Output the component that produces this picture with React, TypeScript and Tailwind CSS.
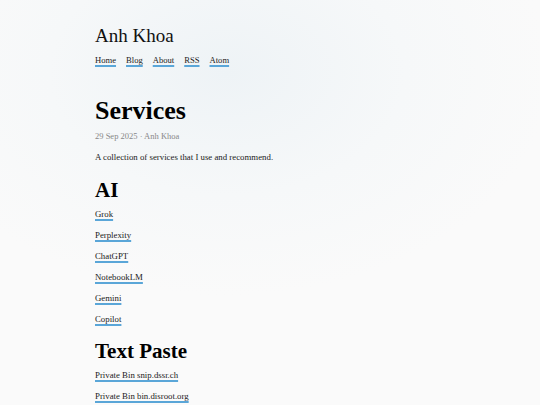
const AI_LINKS = ["Grok", "Perplexity", "ChatGPT", "NotebookLM", "Gemini", "Copilot"];
const PASTE_LINKS = ["Private Bin snip.dssr.ch", "Private Bin bin.disroot.org"];
const NAV = ["Home", "Blog", "About", "RSS", "Atom"];

const linkCls =
  "text-[#222] underline decoration-[#5aa6d8] decoration-2 underline-offset-2";

export default function App() {
  return (
    <div
      className="min-h-[405px] w-[540px] overflow-hidden bg-[#fafafa] bg-[radial-gradient(ellipse_60%_55%_at_42%_18%,#eef3f6_0%,#f6f8f9_55%,#fafafa_100%)] text-[#1a1a1a]"
      style={{ fontFamily: '"Liberation Serif", "DejaVu Serif", serif' }}
    >
      <div className="pl-[95px] pt-[24px]">
        <header>
          <h1 className="text-[19px] leading-[24px] text-[#111]">Anh Khoa</h1>
          <nav className="mt-[6px] flex gap-[10px] text-[8.6px] leading-[12px]">
            {NAV.map((n) => (
              <a key={n} href="#" className={linkCls}>
                {n}
              </a>
            ))}
          </nav>
        </header>

        <main className="mt-[29px]">
          <h2 className="text-[26px] font-bold leading-[32px] text-black">Services</h2>
          <p className="mt-[3px] text-[8.5px] leading-[12px] text-[#888]">29 Sep 2025 · Anh Khoa</p>
          <p className="mt-[9px] text-[8.8px] leading-[12px] text-[#222]">
            A collection of services that I use and recommend.
          </p>

          <h3 className="mt-[14px] text-[21px] font-bold leading-[26px] text-black">AI</h3>
          <ul className="mt-[5px] flex flex-col gap-[9px] text-[8.8px] leading-[12px]">
            {AI_LINKS.map((l) => (
              <li key={l}>
                <a href="#" className={linkCls}>
                  {l}
                </a>
              </li>
            ))}
          </ul>

          <h3 className="mt-[13px] text-[21px] font-bold leading-[26px] text-black">Text Paste</h3>
          <ul className="mt-[5px] flex flex-col gap-[9px] text-[8.8px] leading-[12px]">
            {PASTE_LINKS.map((l) => (
              <li key={l}>
                <a href="#" className={linkCls}>
                  {l}
                </a>
              </li>
            ))}
          </ul>
        </main>
      </div>
    </div>
  );
}
